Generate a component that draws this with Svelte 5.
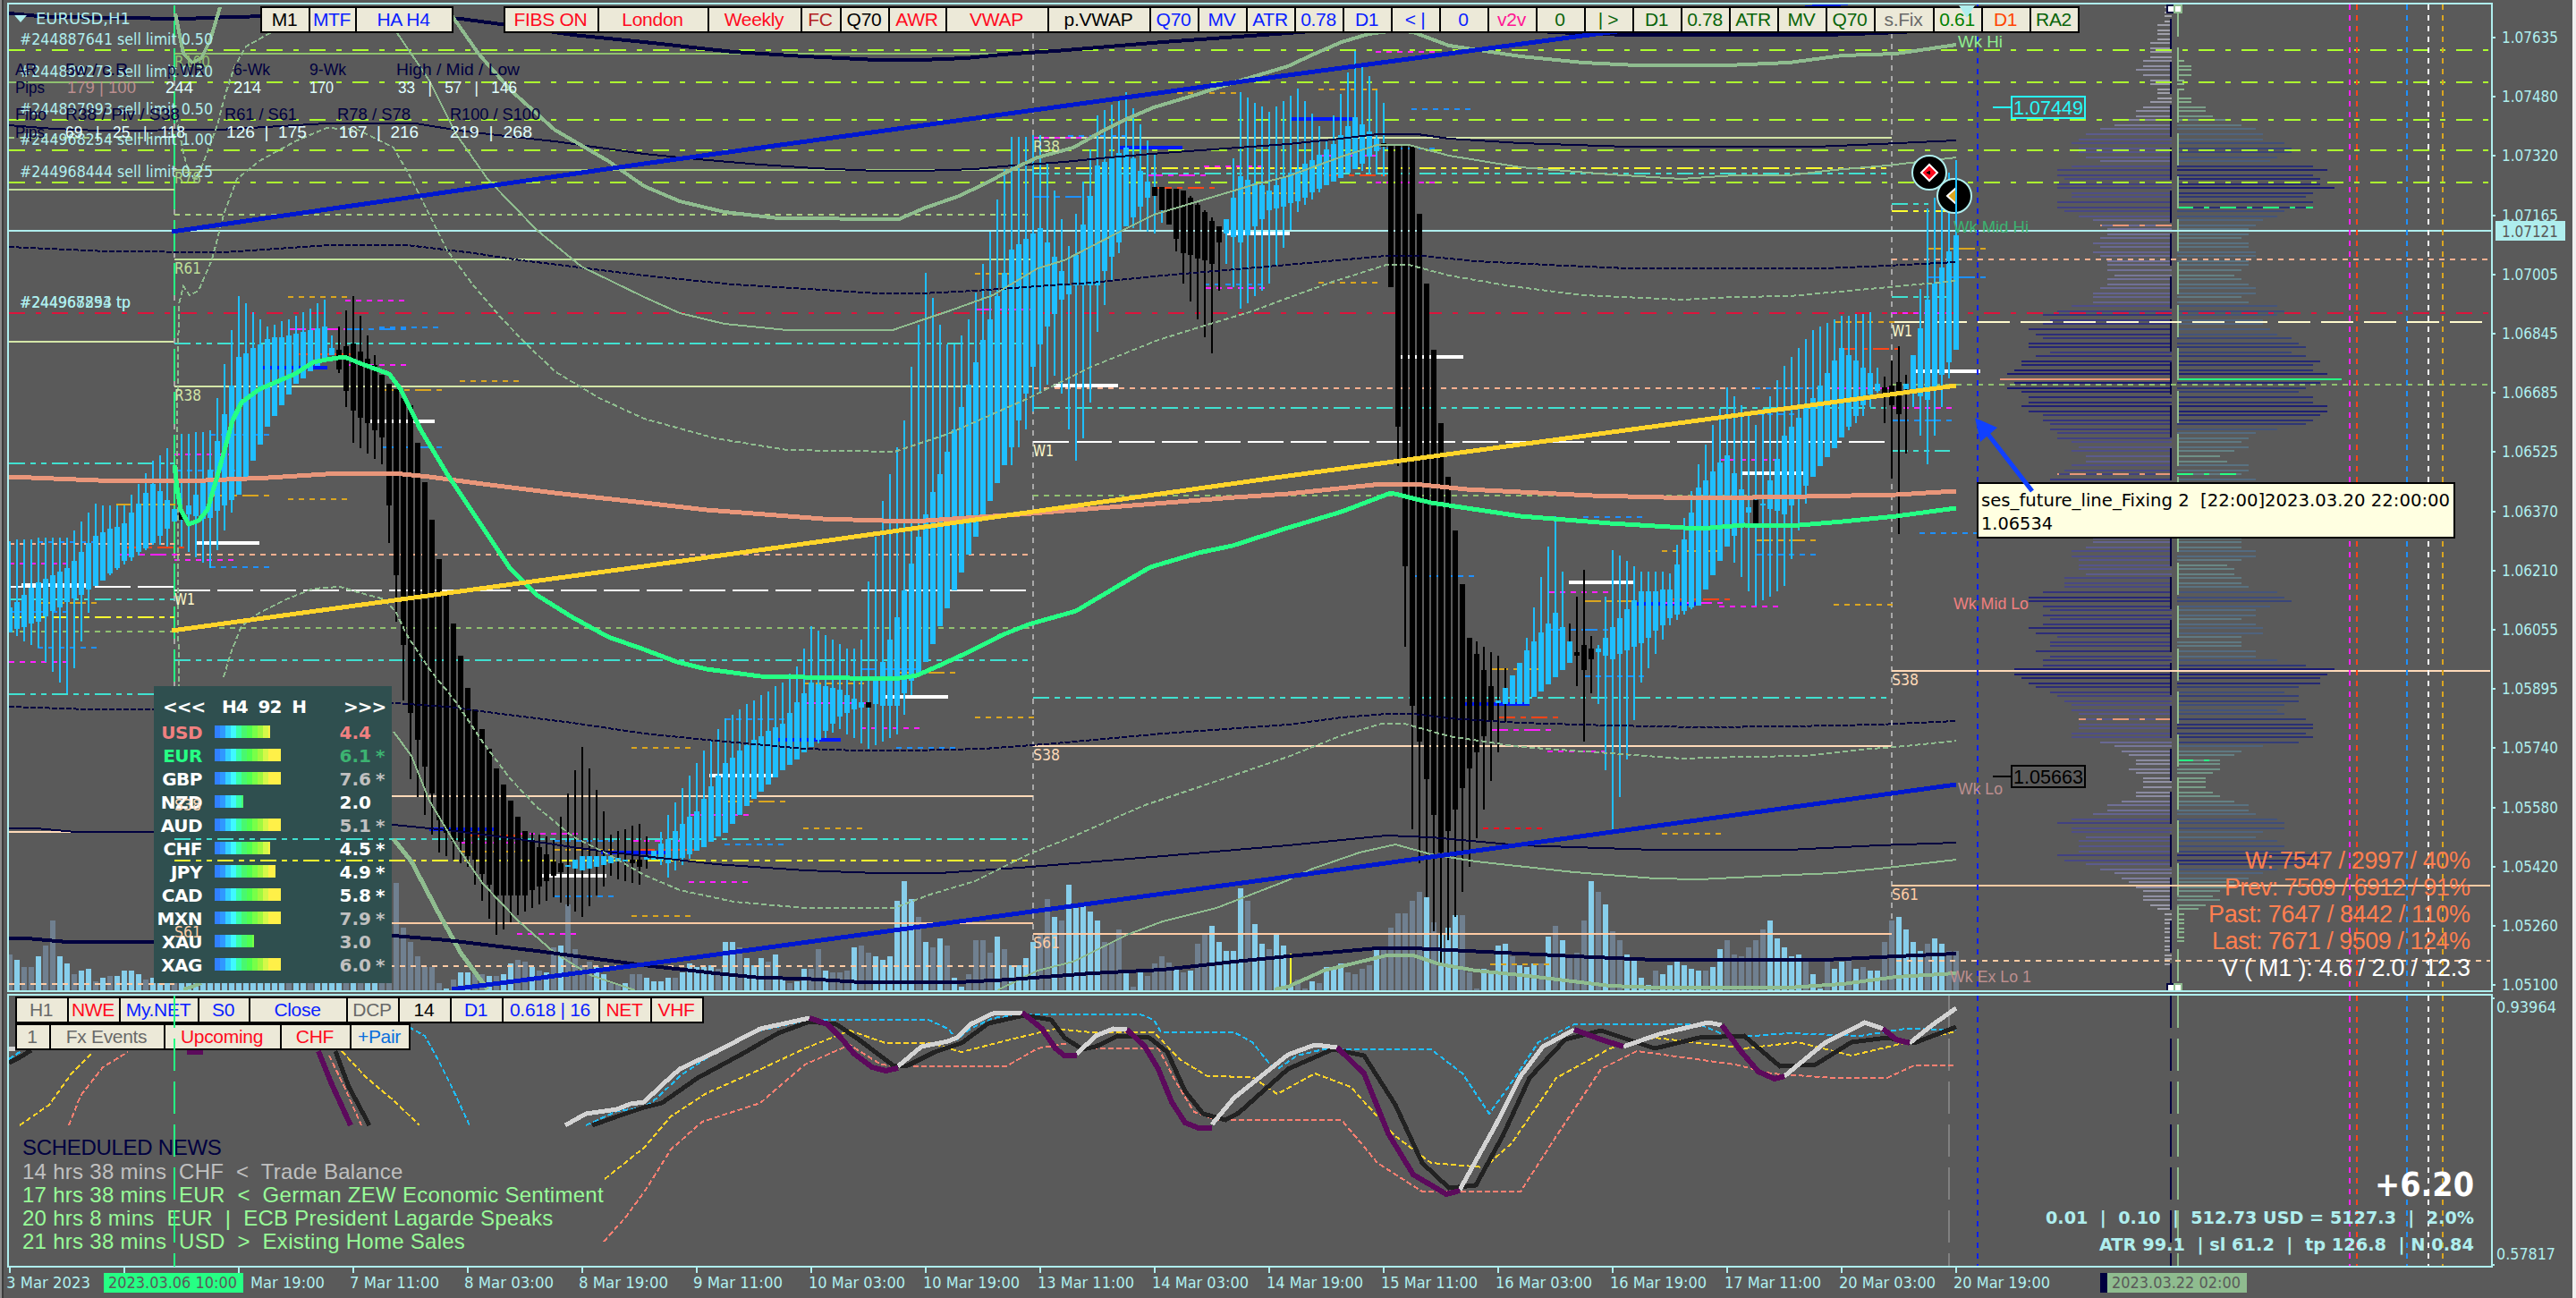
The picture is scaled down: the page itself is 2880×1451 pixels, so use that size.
<script lang="ts">
	const STEP = 8;
	const X0 = 11;
	const BLUE = '#1fbfff';
	const SAGE = '#8fbc8f';
	const NAVY = '#00003f';
	const AQUA = '#afeeee';

	// high, open/close top, open/close bottom, low - in chart pixels, one bar each
	const bars = `605,679,707,707 603,673,703,711 603,665,701,717 603,657,697,721 601,651,695,724 601,647,689,740 601,643,683,751 601,639,679,763
601,635,673,775 593,627,669,747 583,617,665,717 573,607,659,685 563,599,655,655 565,595,649,649 565,591,641,643 565,589,635,637
565,585,627,631 553,573,623,627 541,563,617,621 529,551,613,615 515,541,607,609 509,549,599,609 501,559,591,611 569,569,583,583
485,573,581,611 485,565,575,617 483,553,577,623 483,537,580,629 481,525,579,635 445,493,571,615 407,463,565,593 369,431,559,573
331,399,553,553 339,395,533,533 349,389,515,515 357,385,497,497 365,379,477,477 363,377,465,465 359,377,453,453 357,375,441,441
353,373,429,429 349,371,423,423 345,369,415,415 339,367,409,409 335,365,403,403 375,389,397,397 365,391,413,417 347,387,437,455
331,384,459,495 353,393,467,501 375,401,473,507 397,408,481,513 419,419,489,519 429,429,565,607 435,435,643,695 445,445,721,783
453,453,797,871 495,495,827,891 539,539,857,911 581,581,887,933 625,625,917,953 663,663,931,957 697,697,940,961 733,733,941,965
769,769,957,969 793,793,961,989 815,815,977,1007 837,837,989,1027 859,859,1001,1045 877,877,1001,1039 895,895,1001,1031 913,913,1001,1023
929,929,1001,1019 931,939,995,1015 933,947,991,1011 935,955,985,1007 939,963,979,1003 913,965,975,1009 887,967,969,1013 861,961,971,1019
835,957,973,1025 859,957,971,1013 883,957,969,1001 907,957,967,991 933,957,965,979 929,959,963,983 927,961,963,985 923,961,965,987
921,961,969,989 935,957,961,971 951,951,961,961 930,943,961,967 911,938,965,981 897,929,961,973 881,921,959,967 867,913,955,960
853,907,951,951 839,893,947,947 828,879,941,941 815,867,935,935 803,853,931,931 799,847,921,921 793,839,911,911 787,833,901,901
783,827,893,893 777,823,885,885 773,817,877,877 767,813,869,869 763,809,861,861 753,797,855,855 745,785,849,849 725,775,841,841
700,763,835,835 705,765,827,831 710,767,817,825 715,769,809,819 720,771,801,815 725,777,797,821 725,781,793,825 715,785,791,831
650,785,791,837 600,760,787,833 560,740,789,829 530,715,789,825 500,690,789,821 470,660,775,799 410,630,761,777 363,600,755,755
305,575,740,740 333,550,720,720 363,530,700,700 385,505,680,680 385,480,660,660 375,455,640,640 357,430,620,620 327,405,600,600
295,380,580,580 259,357,560,560 223,331,540,540 189,305,520,520 153,279,500,520 153,273,470,500 153,267,440,480 151,261,410,460
151,255,385,440 183,271,365,430 213,287,351,420 245,303,335,440 275,319,329,480 239,285,319,515 203,251,319,490 167,219,319,450
129,185,319,371 123,181,303,341 117,177,287,313 113,171,271,283 103,165,253,253 121,177,243,255 139,191,231,257 157,203,221,259
173,209,219,261 209,209,235,249 211,211,251,251 211,211,267,281 213,213,283,317 219,221,285,337 227,229,289,357 235,237,291,377
243,247,295,395 253,253,271,325 245,245,261,295 177,221,265,321 103,197,271,345 109,201,263,339 115,205,253,331 119,207,245,325
125,213,235,317 119,207,233,297 113,199,231,277 107,193,227,257 99,189,225,237 113,183,221,229 127,179,215,223 141,173,211,215
157,167,207,207 129,161,203,203 105,151,199,199 81,141,193,193 57,131,189,189 73,139,183,191 85,147,175,195 101,155,169,195
115,160,164,197 161,161,321,321 161,161,477,521 161,161,633,723 163,163,789,927 239,239,829,965 317,317,871,1003 391,391,911,1041
473,473,953,1079 533,533,929,1051 593,593,905,1025 653,653,881,997 713,713,859,969 717,731,841,937 723,749,823,905 729,767,805,873
733,783,786,841 747,769,787,807 755,755,787,787 741,741,787,787 713,727,787,787 679,717,779,779 645,707,773,773 611,697,765,765
577,685,757,757 639,701,749,749 697,717,741,741 667,729,733,767 637,721,749,829 711,725,737,775 721,725,729,787 667,713,733,861
615,701,737,929 621,691,731,891 627,681,727,849 633,671,723,805 639,661,719,763 639,661,713,747 639,661,705,731 639,659,699,715
641,659,691,699 609,631,687,693 579,603,683,687 549,573,679,681 519,545,677,677 497,537,659,659 475,527,643,643 457,517,627,627
433,509,611,611 443,529,599,629 453,547,585,645 465,567,573,661 475,559,586,677 457,563,565,671 443,537,569,667 425,513,571,661
409,487,575,655 399,477,565,625 389,467,553,593 379,455,543,563 369,445,533,533 365,431,521,521 361,417,511,511 357,403,501,501
353,389,489,489 353,397,477,481 351,403,465,473 351,411,453,465 349,417,441,455 411,429,437,439 421,433,441,473 403,431,453,535
387,427,463,597 419,429,435,507 397,397,439,455 323,367,443,487 233,335,447,519 221,317,433,487 206,299,419,455 193,281,405,423
179,263,391,391`
		.split(/\s+/)
		.map((s) => s.split(',').map(Number));

	const inRange = (i: number, ranges: number[][]) => ranges.some(([a, b]) => i >= a && i <= b);
	const bearBody = [[24, 24], [46, 77], [87, 88], [120, 120], [160, 169], [192, 207], [219, 221], [244, 244], [262, 264]];
	const bearWick = [[46, 89], [162, 169], [193, 209], [218, 221], [262, 265]];

	const candles = bars.map(([h, t, b, l], i) => ({
		x: X0 + i * STEP,
		h,
		t,
		b,
		l,
		body: inRange(i, bearBody) ? '#000' : BLUE,
		wick: inRange(i, bearWick) ? '#000' : BLUE
	}));

	// volume heights, negative = falling volume
	const volumes = [
		-40, 34, -26, -26, 38, -50, -78, 38, 30, -18, 22, 24, -10, 14, -16, 16, 22, 22, 18, -12, 14, 12, 12, -14, 10, 12, 14, 10, 12,
		14, 10, 12, 14, 10, 12, 14, 12, 10, 12, -14, 10, 12, -14, 10, 12, 14, 10, -12, 14, -10, 12, 14, -30, -60, -120, -70, -54,
		-38, -26, -26, -8, 2, -12, 20, 20, -18, -18, 16, -16, 18, 30, -34, -32, 26, -22, 20, -48, 50, -96, -46, -28, -32, 26, 18, -8,
		-6, 8, -18, -18, 14, 10, 10, 14, -14, 20, 30, 26, 26, 28, -24, 54, 54, -48, 36, 28, 36, -32, 40, 12, -8, 10, 24, -24, -46,
		22, -20, -20, -22, 48, -50, -42, 38, 34, 38, 100, 122, 102, -82, 54, -48, 58, -50, 14, 4, -18, -56, -56, -42, 60, -46, 28, 28,
		36, 54, -64, -102, 82, -78, 118, 92, 94, 88, 78, -54, -53, -68, 20, -4, 24, -16, -30, -38, -31, 26, -20, 22, -52, -62, 72, 54,
		44, 44, 114, -100, 74, 52, -46, 64, 50, 6, -12, -2, 10, -8, 26, 24, 30, -20, -18, -24, -28, 46, -46, -70, -86, -86, -100,
		-110, 104, -76, 62, 70, 84, -84, -20, -2, 24, 22, 50, 52, -38, 28, 26, 30, -30, 60, -72, 56, -38, -42, -78, 122, -110, 96,
		-66, -56, 40, 36, 14, 6, -22, 18, 28, 32, 28, 24, 22, -22, 26, 46, -56, -40, -38, -48, -56, -68, 78, 58, 48, 38, 40, -32, 18,
		2, -32, 24, 32, -34, 24, -26, 22, 22, -54, -78, 82, 68, 54, 44, -52, 58, 52, -44, -44
	];

	const profLeft = [
		1, 1, 1, 1, 2, 2, 2, 2, 3, 3, 3, 3, 4, 4, 5, 4, 3, 3, 2, 2, 2, 3, 4, 5, 5, 6, 8, 10, 12, 13, 14, 13, 13, 12, 10, 14, 16, 16,
		15, 16, 16, 14, 14, 16, 16, 15, 13, 11, 10, 9, 9, 10, 11, 10, 11, 10, 9, 9, 9, 8, 9, 9, 10, 11, 11, 11, 14, 16, 18, 17, 18,
		20, 19, 18, 20, 20, 17, 19, 21, 21, 22, 23, 24, 22, 23, 21, 20, 20, 21, 20, 18, 18, 17, 17, 16, 16, 14, 13, 14, 12, 12, 14,
		15, 16, 17, 16, 16, 16, 16, 15, 15, 14, 14, 13, 13, 12, 12, 11, 11, 12, 14, 14, 13, 13, 13, 12, 15, 15, 15, 18, 20, 20, 18,
		17, 18, 17, 18, 20, 19, 16, 17, 17, 19, 17, 18, 18, 22, 22, 21, 20, 19, 17, 16, 15, 14, 14, 13, 13, 13, 13, 14, 14, 10, 8, 7,
		6, 5, 5, 6, 5, 4, 4, 4, 5, 5, 7, 9, 9, 11, 14, 16, 14, 14, 12, 13, 13, 13, 16, 15, 12, 10, 8, 7, 6, 5, 4, 4, 4, 3, 2, 1, 1,
		1, 1, 1, 1, 1, 1, 1, 1, 1, 1
	];
	const profRight = [
		0, 0, 0, 0, 0, 0, 0, 0, 0, 0, 0, 0, 1, 2, 2, 2, 1, 1, 1, 0, 2, 2, 4, 4, 5, 7, 9, 11, 12, 12, 15, 16, 16, 14, 13, 19, 21, 19,
		20, 20, 22, 19, 18, 19, 19, 15, 14, 12, 11, 10, 10, 9, 10, 10, 11, 11, 10, 10, 9, 8, 9, 10, 11, 11, 9, 10, 14, 15, 14, 12, 12,
		13, 14, 16, 17, 18, 16, 18, 20, 19, 19, 21, 23, 20, 18, 17, 19, 19, 21, 21, 20, 19, 18, 14, 11, 10, 9, 10, 8, 6, 7, 10, 10, 9,
		11, 10, 10, 10, 10, 10, 10, 10, 10, 10, 10, 10, 10, 9, 9, 9, 11, 11, 9, 7, 8, 8, 9, 9, 10, 14, 15, 16, 13, 11, 11, 9, 11, 12,
		12, 9, 9, 9, 11, 11, 14, 18, 22, 21, 20, 20, 17, 15, 17, 17, 15, 14, 15, 18, 19, 19, 18, 19, 17, 12, 9, 8, 6, 6, 6, 5, 4, 4,
		4, 5, 6, 8, 10, 10, 11, 14, 15, 15, 12, 11, 14, 15, 16, 20, 20, 18, 14, 12, 10, 8, 7, 6, 5, 6, 4, 3, 1, 1, 1, 1, 1, 1, 1
	];

	const rowY = (k: number) => Math.round((8 + k * 5.07) / 2) * 2;
	function mix(from: number[], n: number) {
		const f = Math.min(n / 22, 1);
		const to = [25, 25, 112];
		return `rgb(${from.map((c, i) => Math.round(c + (to[i] - c) * f)).join(',')})`;
	}

	// horizontal levels: x1, x2, y, colour, dash, width
	const DD = '18 12 6 12';
	const DDD = '18 6 6 6 6 6';
	const DOT = '6 6';
	const LONG = '40 8';
	type Level = [number, number, number, string, string?, number?];
	const levels: Level[] = [
		...[56, 92, 134, 168, 204].map((y) => [10, 2784, y, '#adff2f', DD] as Level),
		[10, 2784, 350, '#dc143c', DD],
		[195, 1120, 60, '#8fc070'],
		[10, 170, 92, '#8fc070'],
		[10, 170, 154, '#a0c880', DOT],
		[195, 1155, 190, '#a6cc80'],
		[10, 195, 212, '#c0dc98'],
		[195, 1155, 240, '#a6cf80', DOT],
		[195, 1155, 290, '#bfe09a'],
		[10, 194, 382, '#d4e6a8'],
		[195, 1155, 432, '#d4e6a8'],
		[195, 1155, 384, '#40e0d0', DDD],
		[10, 195, 518, '#40e0d0', DDD],
		[10, 195, 608, '#ffb090', DOT],
		[195, 1155, 620, '#ffb090', DOT],
		[10, 195, 656, '#fff', LONG],
		[195, 1155, 660, '#fff', LONG],
		[10, 195, 670, '#40e0d0', DDD],
		[10, 195, 690, '#ffff30', DDD],
		[10, 195, 706, '#90c070', DOT],
		[245, 1155, 702, '#90c070', DOT],
		[195, 1155, 738, '#40e0d0', DDD],
		[10, 195, 776, '#40e0d0', DDD],
		[195, 1155, 890, '#ffdab9'],
		[195, 1155, 938, '#40e0d0', DDD],
		[195, 1155, 962, '#ffff30', DDD],
		[10, 80, 930, '#ffdab9'],
		[195, 1155, 1032, '#ffcba4'],
		[195, 1155, 1080, '#ffcba4', DOT],
		[10, 195, 1100, '#ffcba4', DOT],
		[1155, 2115, 154, '#d4e6a8'],
		[1155, 2109, 188, '#ffff30', DDD],
		[1155, 2109, 194, '#40e0d0', DDD],
		[1155, 2115, 434, '#ffb090', DOT],
		[1155, 2109, 456, '#40e0d0', DDD],
		[1155, 2109, 494, '#fff', LONG],
		[1155, 2115, 554, '#90c070', DOT],
		[1155, 2109, 780, '#40e0d0', DDD],
		[1155, 2115, 834, '#ffdab9'],
		[1155, 2115, 1044, '#ffcba4'],
		[2115, 2156, 228, '#40e0d0', DDD],
		[2115, 2180, 236, '#ffff30', DDD],
		[2115, 2784, 290, '#ffb090', DOT],
		[2115, 2780, 360, '#fffacd', '36 12'],
		[2115, 2180, 332, '#40e0d0', DDD],
		[2115, 2784, 430, '#90c070', DOT],
		[2115, 2180, 504, '#40e0d0', DDD],
		[2115, 2784, 750, '#ffdab9'],
		[2115, 2784, 990, '#ffcba4'],
		[2120, 2784, 1074, '#ffcba4', DOT]
	];

	const M = '#ff20ff';
	const D = '#1e90ff';
	const G = '#daa520';
	const O = '#ff4518';
	const W = '#fff';
	const B = '#0018ff';
	// session open/close ticks: x, y, colour, kind (d = dotted, w = wide)
	type Tick = [number, number, string, string?];
	const ticks: Tick[] = [
		[322, 332, G, 'd'], [386, 336, M, 'd'], [324, 368, M], [388, 368, D], [424, 366, D, 'd'], [294, 411, B, 'w'],
		[330, 396, O], [388, 408, M, 'd'], [514, 426, G, 'd'], [428, 436, G], [428, 500, D], [414, 471, W, 'w'],
		[130, 564, G], [140, 612, O], [132, 620, M], [195, 508, M, 'd'], [197, 526, D, 'd'], [235, 486, D, 'd'],
		[235, 554, G], [322, 558, G, 'd'], [218, 607, W, 'w'], [195, 626, M, 'd'], [235, 634, D, 'd'], [10, 630, M, 'd'],
		[42, 606, D, 'd'], [24, 654, W, 'w'], [42, 674, G], [10, 684, D, 'd'], [42, 724, D, 'd'], [10, 740, M, 'd'],
		[480, 927, B, 'w'], [523, 934, O], [515, 942, M, 'd'], [515, 952, G, 'd'], [580, 932, M, 'd'], [620, 940, D, 'd'],
		[620, 950, G, 'd'], [620, 1002, D, 'd'], [606, 979, W, 'w'], [578, 1044, M, 'd'], [672, 953, B, 'w'], [706, 1024, G, 'd'],
		[706, 836, G, 'd'], [708, 940, M, 'd'], [714, 950, O], [811, 804, D, 'd'], [812, 896, G], [793, 867, W, 'w'],
		[771, 911, M, 'd'], [770, 986, M, 'd'], [810, 944, D, 'd'], [898, 926, G, 'd'], [868, 827, B, 'w'], [902, 786, M],
		[900, 764, G, 'd'], [962, 748, D], [962, 814, M, 'd'], [1002, 836, D, 'd'], [1002, 752, G], [988, 779, W, 'w'],
		[1090, 802, G, 'd'], [1090, 306, G, 'd'], [1091, 346, M], [1155, 154, M, 'd'], [1194, 152, D, 'd'], [1250, 165, B, 'w'],
		[1155, 220, D], [1282, 196, M], [1346, 186, M, 'd'], [1292, 210, O], [1316, 104, G, 'd'], [1346, 318, D, 'd'],
		[1348, 322, M, 'd'], [1385, 216, G], [1370, 261, W, 'w'], [1444, 133, B, 'w'], [1474, 100, G, 'd'], [1538, 58, M, 'd'],
		[1578, 122, D, 'd'], [1474, 174, M, 'd'], [1484, 196, O], [1538, 204, M, 'd'], [1538, 166, D, 'd'], [1474, 316, G, 'd'],
		[2052, 360, G, 'd'], [2115, 350, M, 'd'], [1582, 644, D, 'd'], [1564, 399, W, 'w'], [1638, 787, B, 'w'], [1668, 748, G],
		[1676, 802, O], [1668, 816, M], [1730, 840, M, 'd'], [1732, 662, M, 'd'], [1772, 672, G], [1732, 704, D],
		[1770, 578, D, 'd'], [1772, 756, D, 'd'], [1754, 651, W, 'w'], [1828, 675, B, 'w'], [1658, 926, '#ff1020', 'd'], [1858, 932, G, 'd'],
		[1858, 616, G, 'd'], [1868, 670, O], [1860, 674, M], [1922, 678, M, 'd'], [1922, 514, M, 'd'], [1940, 463, D, 'd'],
		[1964, 604, G], [1964, 620, D, 'd'], [1948, 529, W, 'w'], [2050, 676, G, 'd'], [1962, 434, D, 'd'], [2058, 390, O],
		[2050, 434, M, 'd'], [2116, 470, D], [2116, 456, M, 'd'], [2142, 415, W, 'w'], [2154, 278, G], [2154, 310, D],
		[2146, 596, D, 'd'], [1666, 1078, G, 'd'], [1178, 431, W, 'w']
	];

	// indicator curves
	const curves: [string, number, string, string?][] = [
		[NAVY, 4, '10,15 55,19 205,21 260,19 420,15 515,21 560,27 640,39 720,47 820,58 900,63 980,67 1030,67 1080,65 1120,61 1180,57 1300,47 1440,37 1530,30 1600,29 1760,37 1820,39 2040,39 2100,37 2187,33'],
		[NAVY, 2, '10,140 60,144 110,146 245,145 365,138 465,138 520,147 620,158 720,172 780,178 850,184 910,188 980,191 1030,191 1090,189 1120,186 1190,181 1240,176 1300,171 1440,161 1490,156 1540,150 1585,150 1620,155 1700,160 1820,164 2030,164 2100,161 2187,157'],
		[NAVY, 2, '10,276 120,281 250,282 370,274 455,274 530,283 575,290 640,298 720,308 820,318 920,324 980,328 1030,328 1090,325 1160,320 1220,316 1300,308 1440,296 1550,286 1590,286 1650,292 1750,297 1820,300 2040,300 2110,297 2187,293', '6 2'],
		[NAVY, 2, '10,790 100,793 172,793 440,786 500,790 560,798 640,808 720,820 800,828 900,837 960,839 1020,839 1100,837 1180,831 1300,820 1440,810 1500,802 1550,798 1580,798 1620,803 1700,808 1800,811 1900,813 2000,812 2100,810 2187,806', '6 2'],
		[NAVY, 2, '10,926 40,926 85,930 172,930 440,922 500,928 580,938 640,947 720,957 800,966 900,973 980,976 1050,976 1140,970 1300,957 1440,945 1550,934 1600,936 1700,945 1850,950 2000,950 2100,945 2187,942'],
		[SAGE, 4, '196,15 205,60 215,70 225,65 235,45 246,8'],
		[SAGE, 4, '500,8 507,20 535,60 570,100 620,145 680,180 720,208 760,225 810,237 870,244 1005,245 1035,232 1070,220 1100,206 1130,190 1160,176 1200,165 1230,148 1255,135 1290,120 1340,105 1380,92 1440,74 1470,60 1500,47 1530,38 1560,34 1580,36 1620,51 1700,63 1770,70 1830,73 1930,73 2000,70 2060,62 2120,60 2187,50'],
		[SAGE, 2, '440,30 444,37 480,90 510,150 545,200 600,257 650,298 720,332 760,350 810,362 880,369 998,369 1030,358 1060,348 1110,330 1130,318 1160,300 1190,291 1250,260 1290,240 1340,225 1400,207 1440,197 1500,175 1540,162 1575,162 1620,174 1700,187 1800,195 1880,200 1940,196 2000,196 2050,190 2110,185 2187,176'],
		[SAGE, 2, '310,32 300,38 275,52 262,75 252,105 243,140 230,175 220,200 212,198 205,170 197,130', '6 3'],
		[SAGE, 2, '201,960 198,470 200,340 205,320 212,330 222,325 237,290 250,240 265,200 290,180 330,158 365,143 400,145 420,155 440,165 460,200 480,240 500,280 530,320 560,355 584,380 620,415 670,445 720,468 800,490 880,503 1000,505 1060,485 1150,445 1220,410 1295,380 1340,366 1400,348 1440,333 1490,315 1550,296 1575,296 1620,308 1690,320 1770,330 1880,335 1940,332 2000,331 2090,323 2187,314', '6 3'],
		[SAGE, 2, '250,757 258,730 270,700 290,685 320,670 350,658 380,656 400,662 430,670 443,685 455,710 480,748 510,785 540,830 570,870 600,902 640,935 680,955 720,978 760,995 820,1008 900,1015 1000,1015 1040,1000 1090,985 1150,955 1200,935 1280,900 1340,880 1440,846 1500,822 1545,809 1570,809 1620,823 1700,835 1800,842 1880,848 1950,846 2020,845 2080,838 2130,834 2187,828', '6 3'],
		[SAGE, 2, '440,818 460,845 480,895 510,945 540,988 580,1030 620,1065 660,1090 710,1107'],
		[SAGE, 2, '1115,1107 1160,1085 1200,1075 1260,1045 1300,1030 1360,1015 1440,984 1465,972 1520,953 1560,944 1600,955 1650,963 1760,975 1850,982 1900,983 1980,979 2050,976 2110,970 2187,961'],
		[SAGE, 5, '440,938 460,963 490,1020 515,1065 545,1106'],
		[SAGE, 4, '205,1106 215,1103 225,1099'],
		[NAVY, 4, '10,1049 30,1049 75,1053 172,1053 440,1046 500,1051 600,1063 720,1079 800,1088 850,1093 899,1094 963,1098 1070,1098 1130,1095 1220,1088 1300,1084 1380,1075 1440,1069 1540,1060 1580,1060 1640,1063 1760,1069 1850,1073 2040,1073 2120,1069 2187,1066'],
		[SAGE, 4, '1425,1106 1440,1103 1480,1085 1550,1068 1580,1068 1610,1078 1650,1085 1700,1090 1800,1102 1850,1104 2000,1104 2060,1100 2120,1092 2187,1088'],
		['#0018d0', 5, '192,259 720,183 1440,84 1784,38 2187,-12'],
		['#0018d0', 5, '505,1106 720,1078 1440,980 2187,877'],
		['#e9967a', 5, '10,533 60,535 110,537 230,537 300,534 380,529 440,529 480,533 540,541 620,551 720,562 790,570 920,580 1020,583 1140,575 1380,556 1440,552 1545,541 1580,541 1640,547 1780,554 1900,557 2020,555 2120,553 2187,549'],
		['#26ff84', 5, '195,520 198,545 202,570 211,586 222,582 232,570 245,525 260,470 270,450 290,435 330,418 350,405 365,402 385,399 405,407 435,418 448,435 470,480 500,530 540,590 570,635 600,665 640,690 680,712 720,726 757,740 790,748 850,756 1000,759 1025,755 1050,744 1085,728 1120,710 1150,698 1203,683 1250,655 1286,634 1340,618 1378,610 1440,590 1500,572 1555,551 1600,562 1700,577 1800,585 1900,591 1950,587 2000,588 2060,583 2120,577 2187,568'],
		['#ffd42a', 5, '192,705 720,633 1440,532 2187,431']
	];

	const BAND = '#1fbfff';
	const MID = '#ffd42a';
	const LOWB = '#fa8072';
	const oscBands: [string, string][] = [
		[BAND, '10,1184 25,1174'],
		[BAND, '457,1148 475,1158 490,1185 505,1215 525,1258'],
		[BAND, '655,1258 690,1242 720,1238 735,1227 760,1203 800,1176 850,1152 905,1140 1038,1140 1060,1150 1070,1162 1085,1150 1110,1138 1145,1134 1275,1134 1290,1140 1298,1154 1380,1154 1400,1165 1420,1190 1430,1194 1450,1180 1480,1173 1600,1173 1635,1200 1665,1245 1690,1210 1720,1165 1760,1145 1900,1145 1935,1160 2000,1155 2080,1158 2130,1150 2187,1151'],
		[MID, '22,1258 55,1235 80,1200 103,1177'],
		[MID, '382,1175 410,1205 440,1230 469,1258'],
		[MID, '676,1318 720,1283 750,1248 790,1222 840,1200 900,1172 950,1152 990,1166 1040,1166 1075,1176 1130,1162 1180,1150 1220,1154 1290,1154 1320,1185 1350,1203 1400,1204 1428,1223 1470,1200 1510,1215 1560,1270 1600,1300 1660,1305 1690,1278 1740,1205 1800,1172 1850,1160 1950,1172 2010,1165 2070,1180 2120,1168 2187,1153'],
		[LOWB, '77,1258 90,1225 115,1193 143,1176'],
		[LOWB, '368,1180 385,1215 404,1258'],
		[LOWB, '675,1388 700,1360 722,1330 750,1285 785,1254 850,1233 900,1190 950,1168 985,1190 1005,1192 1125,1192 1160,1172 1195,1166 1215,1172 1295,1172 1315,1210 1335,1243 1360,1252 1470,1252 1500,1252 1540,1300 1590,1332 1700,1332 1740,1270 1790,1195 1830,1175 1940,1190 1980,1200 2050,1205 2110,1205 2140,1191 2187,1191']
	];
	const slow = [
		'10,1188 22,1182 35,1174',
		'375,1175 390,1215 413,1258',
		'662,1258 690,1248 720,1238 740,1233 780,1205 830,1178 870,1155 905,1142 935,1145 960,1162 1000,1192 1015,1191 1045,1176 1075,1166 1105,1144 1145,1135 1175,1140 1190,1160 1210,1173 1225,1170 1250,1158 1285,1160 1305,1176 1325,1220 1345,1245 1370,1252 1385,1244 1440,1195 1490,1173 1525,1180 1560,1235 1590,1300 1620,1328 1650,1325 1680,1270 1710,1205 1750,1162 1790,1152 1850,1172 1900,1160 1950,1158 1990,1192 2030,1190 2070,1165 2110,1160 2140,1166 2187,1148'
	];
	const rising = [
		'10,1172 17,1172',
		'632,1258 655,1245 690,1240 705,1234 720,1232 740,1213 760,1195 800,1176 850,1150 905,1138',
		'1004,1192 1030,1170 1060,1164 1070,1160 1085,1145 1110,1133 1143,1132',
		'1204,1178 1225,1158 1245,1150 1260,1151',
		'1355,1257 1380,1227 1440,1179 1470,1168 1495,1171',
		'1632,1330 1672,1258 1700,1203 1725,1170 1760,1151',
		'1815,1170 1855,1156 1910,1143 1925,1146',
		'1995,1203 2040,1166 2085,1143 2105,1150',
		'2135,1166 2160,1146 2187,1127'
	];
	const falling = [
		'209,1176 227,1176',
		'356,1175 370,1210 392,1258',
		'905,1138 925,1145 940,1160 955,1178 975,1193 990,1197 1004,1194',
		'1143,1132 1165,1150 1180,1172 1190,1180 1204,1180',
		'1260,1151 1280,1170 1295,1195 1310,1232 1325,1255 1340,1261 1355,1261',
		'1495,1171 1525,1200 1552,1267 1580,1313 1617,1335 1632,1331',
		'1760,1151 1790,1162 1815,1170',
		'1925,1146 1947,1176 1966,1198 1984,1206 1995,1203',
		'2105,1150 2120,1162 2135,1166'
	];

	const prices = ['1.07635', '1.07480', '1.07320', '1.07165', '1.07005', '1.06845', '1.06685', '1.06525', '1.06370', '1.06210', '1.06055', '1.05895', '1.05740', '1.05580', '1.05420', '1.05260', '1.05100'];
	const times = ['3 Mar 2023', '', 'Mar 19:00', '7 Mar 11:00', '8 Mar 03:00', '8 Mar 19:00', '9 Mar 11:00', '10 Mar 03:00', '10 Mar 19:00', '13 Mar 11:00', '14 Mar 03:00', '14 Mar 19:00', '15 Mar 11:00', '16 Mar 03:00', '16 Mar 19:00', '17 Mar 11:00', '20 Mar 03:00', '20 Mar 19:00'];

	// text, x, baseline, width, colour
	type Label = [string, number, number, number, string];
	const tags: Label[] = [
		['EURUSD,H1', 40, 27, 106, AQUA],
		['#244887641 sell limit 0.50', 22, 50, 216, AQUA],
		['#244889273 sell limit 0.20', 22, 86, 216, AQUA],
		['#244897993 sell limit 0.50', 22, 128, 216, AQUA],
		['#244968254 sell limit 1.00', 22, 162, 216, AQUA],
		['#244968444 sell limit 0.25', 22, 198, 216, AQUA],
		['#244968254 tp', 22, 344, 124, AQUA],
		['#244967893 tp', 22, 344, 124, AQUA],
		['R100', 195, 75, 40, '#8fc070'],
		['R78', 195, 205, 30, '#a6cc80'],
		['R61', 195, 306, 30, '#bfe09a'],
		['R38', 195, 448, 30, '#d4e6a8'],
		['W1', 195, 676, 23, '#fffacd'],
		['R38', 1155, 170, 30, '#d4e6a8'],
		['W1', 1155, 510, 23, '#fffacd'],
		['S38', 1155, 850, 30, '#ffdab9'],
		['S61', 1155, 1060, 30, '#ffcba4'],
		['W1', 2115, 376, 23, '#fffacd'],
		['S38', 2115, 766, 30, '#ffdab9'],
		['S61', 2115, 1006, 30, '#ffcba4']
	];
	const weekly: Label[] = [
		['Wk Hi', 2189, 53, 50, '#90ee90'],
		['Wk Mid Hi', 2184, 260, 84, '#3cb371'],
		['Wk Mid Lo', 2184, 681, 84, '#f08080'],
		['Wk Lo', 2189, 888, 50, '#bc8f8f'],
		['Wk Ex Lo 1', 2180, 1098, 91, '#bc8f8f']
	];
	const PALE = '#e0ffff';
	const ranges: Label[] = [
		['AR', 17, 84, 24, NAVY],
		['5w / c.R', 73, 84, 70, NAVY],
		['p.WR', 187, 84, 42, NAVY],
		['6-Wk', 261, 84, 41, NAVY],
		['9-Wk', 346, 84, 41, NAVY],
		['High / Mid / Low', 443, 84, 138, NAVY],
		['Pips', 17, 104, 33, NAVY],
		['179 | 100', 75, 104, 77, '#bc8f8f'],
		['244', 185, 104, 31, PALE],
		['214', 261, 104, 31, PALE],
		['170', 346, 104, 27, PALE],
		['33   |   57   |   146', 445, 104, 133, PALE],
		['Fibo', 17, 134, 35, NAVY],
		['R38 / Piv / S38', 73, 134, 128, NAVY],
		['R61 / S61', 251, 134, 81, NAVY],
		['R78 / S78', 377, 134, 82, NAVY],
		['R100 / S100', 503, 134, 101, NAVY],
		['Pips', 17, 154, 33, NAVY],
		['69   |   25   |   118', 73, 154, 134, PALE],
		['126  |  175', 253, 154, 90, PALE],
		['167  |  216', 379, 154, 89, PALE],
		['219  |  268', 503, 154, 92, PALE]
	];

	// text, width, colour
	type Btn = [string, number, string];
	const R = '#ff0a1e';
	const U = '#0a1eff';
	const E = '#0a640a';
	const Y = '#696969';
	const topLeft: Btn[] = [['M1', 54, '#000'], ['MTF', 52, U], ['HA H4', 108, U]];
	const topRight: Btn[] = [
		['FIBS ON', 105, R], ['London', 123, R], ['Weekly', 104, R], ['FC', 44, '#b22222'], ['Q70', 54, '#000'], ['AWR', 64, R],
		['VWAP', 114, R], ['p.VWAP', 114, '#000'], ['Q70', 54, U], ['MV', 54, U], ['ATR', 54, U], ['0.78', 54, U], ['D1', 54, U],
		['< |', 54, U], ['0', 54, U], ['v2v', 54, '#ff1493'], ['0', 54, E], ['| >', 54, E], ['D1', 54, E], ['0.78', 54, E],
		['ATR', 54, E], ['MV', 54, E], ['Q70', 54, E], ['s.Fix', 66, Y], ['0.61', 54, '#008000'], ['D1', 54, '#ff4500'], ['RA2', 54, E]
	];
	const subFirst: Btn[] = [
		['H1', 58, Y], ['NWE', 58, R], ['My.NET', 88, U], ['S0', 57, U], ['Close', 109, U], ['DCP', 58, Y], ['14', 58, '#000'],
		['D1', 58, U], ['0.618 | 16', 108, U], ['NET', 58, R], ['VHF', 58, R]
	];
	const subSecond: Btn[] = [['1', 38, Y], ['Fx Events', 128, Y], ['Upcoming', 130, R], ['CHF', 78, R], ['+Pair', 66, '#0a6edc']];

	const heat = ['#3080ff', '#3098ff', '#34d0ff', '#40f8ff', '#38ffa8', '#48f870', '#50ff50', '#78ff48', '#a0f840', '#d4f848', '#fff048', '#fff048', '#fff048'];
	const strength = [
		{ name: 'USD', bar: 62, value: '4.4', star: false, color: '#f08080', tint: '#f08080' },
		{ name: 'EUR', bar: 74, value: '6.1', star: true, color: '#26ff84', tint: '#3cb371' },
		{ name: 'GBP', bar: 74, value: '7.6', star: true, color: '#fff', tint: '#c0c0c0' },
		{ name: 'NZD', bar: 32, value: '2.0', star: false, color: '#fff', tint: '#fff' },
		{ name: 'AUD', bar: 74, value: '5.1', star: true, color: '#fff', tint: '#c0c0c0' },
		{ name: 'CHF', bar: 62, value: '4.5', star: true, color: '#fff', tint: '#fff' },
		{ name: 'JPY', bar: 68, value: '4.9', star: true, color: '#fff', tint: '#fff' },
		{ name: 'CAD', bar: 74, value: '5.8', star: true, color: '#fff', tint: '#fff' },
		{ name: 'MXN', bar: 74, value: '7.9', star: true, color: '#fff', tint: '#c0c0c0' },
		{ name: 'XAU', bar: 44, value: '3.0', star: false, color: '#fff', tint: '#c0c0c0' },
		{ name: 'XAG', bar: 74, value: '6.0', star: true, color: '#fff', tint: '#c0c0c0' }
	];

	const futures: [number, string][] = [[2211, '#0a1eff'], [2627, '#ff20ff'], [2635, '#ff4518'], [2691, '#1e90ff'], [2715, '#fff'], [2731, '#daa520']];
</script>

{#snippet buttons(list: Btn[])}
	<div class="group">
		{#each list as [text, width, color]}
			<button style="width: {width}px; color: {color}">{text}</button>
		{/each}
	</div>
{/snippet}

{#snippet labels(list: Label[])}
	{#each list as [text, x, y, w, fill]}
		<text {x} {y} {fill} textLength={w} lengthAdjust="spacingAndGlyphs">{text}</text>
	{/each}
{/snippet}

<main class="terminal">
	<svg class="canvas" width="2880" height="1451" viewBox="0 0 2880 1451">
		<defs>
			<clipPath id="price-clip"><rect x="10" y="5" width="2775" height="1102" /></clipPath>
			<clipPath id="osc-clip"><rect x="10" y="1113" width="2775" height="303" /></clipPath>
		</defs>

		<rect x="0" y="0" width="2" height="1451" fill="#8a8a8a" />
		<rect x="2" y="0" width="2" height="1451" fill="#3c3c3c" />
		<rect x="2876" y="0" width="4" height="1451" fill="#f0f0f0" />

		<g clip-path="url(#price-clip)">
			<g class="crisp">
				<path d="M1155 37V1107M2115 37V1028" stroke="#a9a9a9" stroke-width="2" stroke-dasharray="6 6" />
				<path d="M195 6V1107" stroke="#a9a9a9" stroke-width="2" stroke-dasharray="6 6" />
				<path d="M195 6V1107" stroke="#26ff84" stroke-width="2" stroke-dasharray="36 12" />

				{#each volumes as v, i}
					<rect x={X0 + i * STEP - 3} y={1107 - Math.abs(v)} width="6" height={Math.abs(v)} fill={v < 0 ? '#708090' : '#87ceeb'} />
				{/each}
				<rect x="1442" y="1066" width="2" height="38" fill="#ffff30" />

				{#each profLeft as n, k}
					<rect x={2428 - n * 8} y={rowY(k) - 1} width={n * 8} height="2" fill={k === 82 ? '#e9967a' : mix([172, 172, 176], n)} />
				{/each}
				{#each profRight as n, k}
					<rect x="2434" y={rowY(k) - 1} width={n * 8} height="2" fill={k === 82 ? '#26ff84' : mix([143, 188, 143], n)} />
				{/each}
				<path d="M2428 252H2348M2428 530H2300M2428 804H2324" stroke="#e9967a" stroke-width="2" stroke-dasharray="18 12 6 12" />
				<path d="M2434 232H2586M2434 530H2500M2434 850H2474" stroke="#26ff84" stroke-width="2" stroke-dasharray="18 12 6 12" />
				<path d="M2427 21V1107" stroke={NAVY} stroke-width="2" stroke-dasharray="36 12" />
				<path d="M2435 5V1107" stroke={SAGE} stroke-width="2" stroke-dasharray="36 12" />

				{#each levels as [x1, x2, y, color, dash, width]}
					<line {x1} {x2} y1={y} y2={y} stroke={color} stroke-width={width ?? 2} stroke-dasharray={dash} />
				{/each}
				<path d="M10 258H2785" stroke={AQUA} stroke-width="2" />

				{#each ticks as [x, y, color, kind]}
					<line
						x1={x}
						x2={x + (kind === 'w' ? 72 : 66)}
						y1={y}
						y2={y}
						stroke={color}
						stroke-width={kind === 'w' ? 4 : 2}
						stroke-dasharray={kind === 'd' ? '6 6' : kind === 'w' ? undefined : '18 6 6 6'}
					/>
				{/each}
				{#each candles as c}
					<rect x={c.x - 1} y={c.h} width="2" height={c.l - c.h} fill={c.wick} />
					<rect x={c.x - 3} y={c.t} width="6" height={c.b - c.t} fill={c.body} />
				{/each}
				{#each curves as [color, width, points, dash]}
					<polyline {points} fill="none" stroke={color} stroke-width={width} stroke-dasharray={dash} />
				{/each}
				{#each futures as [x, color]}
					<line x1={x} x2={x} y1="5" y2="1107" stroke={color} stroke-width="2" stroke-dasharray="6 6" />
				{/each}

				<g fill="#fff" stroke-width="2">
					<path d="M2423 6h8v8h-8zM2423 1100h8v8h-8z" stroke={NAVY} />
					<path d="M2431 6h8v8h-8zM2431 1100h8v8h-8z" stroke={SAGE} />
				</g>
			</g>

			<g stroke={AQUA} stroke-width="2">
				<circle cx="2157" cy="193" r="19" />
				<circle cx="2185" cy="219" r="19" />
			</g>
			<path d="M2148 193l9-9 9 9-9 9z" fill="#ff0a1e" stroke="#fff" stroke-width="2" />
			<path d="M2154 193h4M2157 191v4" stroke="#000" stroke-width="2" />
			<path d="M2177 219l10-9v18z" fill="#daa520" stroke="#fff" stroke-width="2" />
			<path d="M2187 179V391" stroke={BLUE} stroke-width="2" />

			<g class="tag">{@render labels(tags)}</g>
			<g class="range">{@render labels(ranges)}</g>
			<g class="week">{@render labels(weekly)}</g>
			<path d="M16 17h14l-7 8z" fill={AQUA} />

			<g class="mark" stroke-width="2" fill="none">
				<path d="M2228 120h20M2249 108h82v24h-82z" stroke="#28f8f8" />
				<text x="2251" y="128" fill="#28f8f8" textLength="78" lengthAdjust="spacingAndGlyphs">1.07449</text>
				<path d="M2228 868h20M2249 856h82v24h-82z" stroke="#000" />
				<text x="2251" y="876" fill="#000" textLength="78" lengthAdjust="spacingAndGlyphs">1.05663</text>
			</g>
		</g>

		<g clip-path="url(#osc-clip)" fill="none">
			<path class="crisp" d="M2179 1113V1416" stroke="#808080" stroke-width="2" stroke-dasharray="36 12" />
			{#each oscBands as [color, points]}
				<polyline class="crisp" {points} stroke={color} stroke-width="2" stroke-dasharray="6 3" />
			{/each}
			{#each slow as points}
				<polyline class="crisp" {points} stroke="#222" stroke-width="5" />
			{/each}
			{#each rising as points}
				<polyline class="crisp" {points} stroke="#d3d3d3" stroke-width="5" />
			{/each}
			{#each falling as points}
				<polyline class="crisp" {points} stroke="#5c0a5c" stroke-width="6" />
			{/each}
			<path class="crisp" d="M2427 1113V1416" stroke={NAVY} stroke-width="2" stroke-dasharray="36 12" />
			<path class="crisp" d="M2435 1113V1416" stroke={SAGE} stroke-width="2" stroke-dasharray="36 12" />
			{#each futures as [x, color]}
				<line class="crisp" x1={x} x2={x} y1="1113" y2="1416" stroke={color} stroke-width="2" stroke-dasharray="6 6" />
			{/each}
		</g>

		<g class="crisp" stroke={AQUA} stroke-width="2" fill="none">
			<path d="M9 4H2786V1108H9zM9 1112H2786V1416H9z" />
			{#each prices as _, i}
				<path d="M2786 {42 + Math.round(i * 66.2)}h4" />
			{/each}
			{#each times as _, i}
				<path d="M{11 + i * 128} 1417v6" />
			{/each}
			<path d="M2786 1116h3M2786 1414h3" />
		</g>

		<g class="tag">
			{#each prices as p, i}
				<text x="2797" y={48 + Math.round(i * 66.2)} fill={AQUA} textLength="63" lengthAdjust="spacingAndGlyphs">{p}</text>
			{/each}
			<rect x="2790" y="247" width="78" height="22" fill={AQUA} />
			<text x="2797" y="265" fill="#5a5a5a" textLength="63" lengthAdjust="spacingAndGlyphs">1.07121</text>
			<text x="2791" y="1132" fill={AQUA} textLength="67" lengthAdjust="spacingAndGlyphs">0.93964</text>
			<text x="2791" y="1408" fill={AQUA} textLength="66" lengthAdjust="spacingAndGlyphs">0.57817</text>
			{#each times as t, i}
				{#if t}
					<text
						x={i === 2 ? 280 : 7 + i * 128 + (i > 6 ? 1 : 0)}
						y="1440"
						fill={AQUA}
						textLength={i === 2 ? 83 : i === 0 ? 94 : i > 6 ? 108 : 100}
						lengthAdjust="spacingAndGlyphs">{t}</text
					>
				{/if}
			{/each}
			<rect x="116" y="1423" width="156" height="22" fill="#26ff84" />
			<text x="121" y="1440" fill="#5a5a5a" textLength="144" lengthAdjust="spacingAndGlyphs">2023.03.06 10:00</text>
			<rect x="2348" y="1423" width="8" height="22" fill={NAVY} />
			<rect x="2356" y="1423" width="156" height="22" fill={SAGE} />
			<text x="2361" y="1440" fill="#5a5a5a" textLength="144" lengthAdjust="spacingAndGlyphs">2023.03.22 02:00</text>
		</g>
	</svg>

	<header class="toolbar">
		{@render buttons(topLeft)}
		{@render buttons(topRight)}
	</header>

	<aside class="strength">
		<div class="head"><span>&lt;&lt;&lt;</span><span>H4&nbsp; 92&nbsp; H</span><span>&gt;&gt;&gt;</span></div>
		{#each strength as s}
			<div class="row">
				<span class="name" style="color: {s.color}">{s.name}</span>
				<span class="bar" style="width: {s.bar}px">
					{#each heat as color}<i style="background: {color}"></i>{/each}
				</span>
				<span class="value" style="color: {s.tint}">{s.value}</span>
				<span class="star" style="color: {s.tint}">{s.star ? '*' : ''}</span>
			</div>
		{/each}
	</aside>

	<section class="oscillator">
		{@render buttons(subFirst)}
		{@render buttons(subSecond)}
		<div class="news">
			<h2>SCHEDULED NEWS</h2>
			<p class="past">14 hrs 38 mins&nbsp; CHF&nbsp; &lt;&nbsp; Trade Balance</p>
			<p>17 hrs 38 mins&nbsp; EUR&nbsp; &lt;&nbsp; German ZEW Economic Sentiment</p>
			<p>20 hrs 8 mins&nbsp; EUR&nbsp; |&nbsp; ECB President Lagarde Speaks</p>
			<p>21 hrs 38 mins&nbsp; USD&nbsp; &gt;&nbsp; Existing Home Sales</p>
		</div>
	</section>

	<!-- lines that run over the panels and buttons -->
	<svg class="canvas over" width="2880" height="1451" viewBox="0 0 2880 1451">
		<path class="crisp" d="M195 1113V1416" stroke="#26ff84" stroke-width="2" stroke-dasharray="36 12" />
		<path class="crisp" d="M195 938H438" stroke="#40e0d0" stroke-width="2" stroke-dasharray="18 6 6 6 6 6" />
		<path class="crisp" d="M195 962H438" stroke="#ffff30" stroke-width="2" stroke-dasharray="18 6 6 6 6 6" />
		<g class="tag">
			<text x="195" y="906" fill="#ffdab9" textLength="30" lengthAdjust="spacingAndGlyphs">S38</text>
			<text x="195" y="1048" fill="#ffcba4" textLength="30" lengthAdjust="spacingAndGlyphs">S61</text>
		</g>
		<path d="M2190 6h18l-9 14z" fill={AQUA} />
		<g class="volume">
			<text x="2510" y="971" textLength="252">W: 7547 / 2997 / 40%</text>
			<text x="2487" y="1001" textLength="275">Prev: 7509 / 6912 / 91%</text>
			<text x="2469" y="1031" textLength="293">Past: 7647 / 8442 / 110%</text>
			<text x="2473" y="1061" textLength="289">Last: 7671 / 9509 / 124%</text>
			<text x="2484" y="1091" textLength="278" fill="#fff">V ( M1 ): 4.6 / 2.0 / 12.3</text>
		</g>
		<g class="account" fill={AQUA}>
			<text class="profit" x="2655" y="1337" textLength="111" lengthAdjust="spacingAndGlyphs" fill="#fff">+6.20</text>
			<text x="2287" y="1368" textLength="479" lengthAdjust="spacingAndGlyphs">0.01&nbsp; |&nbsp; 0.10&nbsp; |&nbsp; 512.73 USD = 5127.3&nbsp; |&nbsp; 2.0%</text>
			<text x="2347" y="1398" textLength="419" lengthAdjust="spacingAndGlyphs">ATR 99.1&nbsp; | sl 61.2&nbsp; |&nbsp; tp 126.8&nbsp; | N 0.84</text>
		</g>
	</svg>

	<div class="tooltip">
		<svg width="531" height="59" viewBox="2212 541 531 59">
			<text x="2215" y="566" textLength="524" lengthAdjust="spacingAndGlyphs">ses_future_line_Fixing 2&nbsp; [22:00]2023.03.20 22:00:00</text>
			<text x="2215" y="592" textLength="80" lengthAdjust="spacingAndGlyphs">1.06534</text>
		</svg>
	</div>
	<svg class="canvas over" width="2880" height="1451" viewBox="0 0 2880 1451">
		<path d="M2272 549L2220 482" stroke="#1040ff" stroke-width="5" />
		<path d="M2208 467l25 11-19 16z" fill="#1040ff" />
	</svg>
</main>

<style>
	:global(body) {
		background: #5a5a5a;
		overflow: hidden;
	}

	.terminal {
		display: grid;
		width: 2880px;
		height: 1451px;
		font-family: 'Liberation Sans', Arial, sans-serif;
		background: #5a5a5a;
	}

	.terminal > * {
		grid-area: 1 / 1;
	}

	.canvas {
		display: block;
	}

	.over {
		pointer-events: none;
	}

	.crisp {
		shape-rendering: crispEdges;
	}

	.tag text {
		font: 18px 'DejaVu Sans Condensed', 'DejaVu Sans', sans-serif;
	}

	.range text,
	.week text {
		font-size: 19px;
		white-space: pre;
	}

	.mark text {
		font-size: 22px;
		stroke: none;
	}

	.volume text {
		font-size: 27px;
	}

	.volume {
		fill: #ff7f50;
	}

	.account text {
		font: bold 20px 'DejaVu Sans Condensed', 'DejaVu Sans', sans-serif;
	}

	.account .profit {
		font-size: 38px;
	}

	.toolbar {
		display: flex;
		align-self: start;
		gap: 56px;
		padding: 7px 0 0 291px;
	}

	.group {
		display: flex;
		padding-right: 2px;
	}

	button {
		flex: none;
		box-sizing: border-box;
		height: 30px;
		margin: 0;
		padding: 0 2px 0 0;
		border: 2px solid #000;
		border-right: 0;
		background: #ece9d8;
		font: 21px/26px 'Liberation Sans', Arial, sans-serif;
		letter-spacing: -0.3px;
		white-space: nowrap;
	}

	button:last-child {
		box-shadow: 2px 0 #000;
	}

	.strength {
		align-self: start;
		box-sizing: border-box;
		width: 266px;
		height: 332px;
		margin: 767px 0 0 172px;
		padding-top: 9px;
		background: #2f4f4f;
		color: #fff;
		font: bold 20px/26px 'DejaVu Sans', Verdana, sans-serif;
	}

	.head {
		display: grid;
		grid-template-columns: 66px 136px 1fr;
		height: 30px;
		padding-left: 10px;
		line-height: 28px;
	}

	.head span {
		white-space: nowrap;
		letter-spacing: -1px;
	}

	.row {
		display: grid;
		grid-template-columns: 54px 74px 115px 20px;
		height: 26px;
	}

	.name {
		text-align: right;
		letter-spacing: -0.5px;
	}

	.bar {
		display: flex;
		overflow: hidden;
		height: 14px;
		margin: 5px 0 0 14px;
	}

	.bar i {
		flex: none;
		width: 6px;
	}

	.value {
		text-align: right;
	}

	.star {
		padding-left: 5px;
	}

	.oscillator {
		align-self: start;
		margin: 1114px 0 0 17px;
	}

	.news {
		padding: 94px 0 0 8px;
		font-size: 24px;
		letter-spacing: 0.27px;
		color: #98fb98;
	}

	.news h2 {
		margin: 0;
		font-size: 24px;
		font-weight: 400;
		line-height: 29px;
		letter-spacing: -0.3px;
		color: #00003f;
	}

	.news p {
		margin: 0;
		line-height: 26px;
		white-space: nowrap;
	}

	.news .past {
		color: #c0c0c0;
	}

	.tooltip {
		align-self: start;
		width: 531px;
		height: 59px;
		margin: 539px 0 0 2210px;
		border: 2px solid #000;
		background: #ffffe1;
	}

	.tooltip text {
		font: 20px 'DejaVu Sans Condensed', 'DejaVu Sans', sans-serif;
	}
</style>
